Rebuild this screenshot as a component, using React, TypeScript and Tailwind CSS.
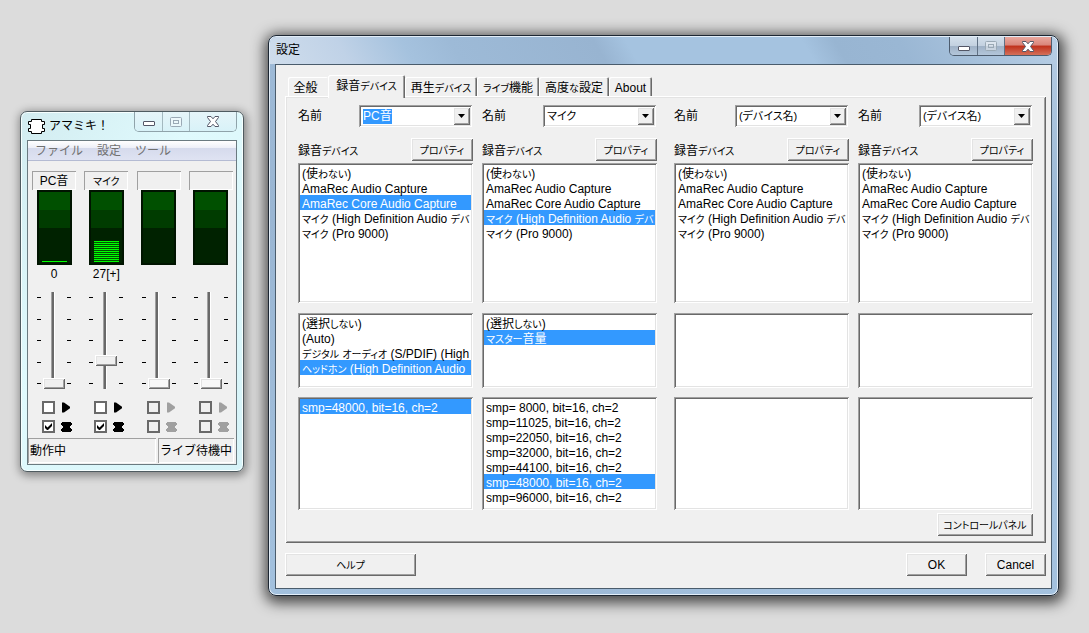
import { useEffect, useRef, useState } from 'react';
import clsx from 'clsx';

interface Device {
  name: string;
  inputs: string[];
  input?: number;
  lines: string[];
  line?: number;
  formats: string[];
  format?: number;
}

interface Channel {
  label: string;
  value: string;
  level: number;
  volume: number;
  enabled: boolean;
}

const INPUTS = [
  '(使わない)',
  'AmaRec Audio Capture',
  'AmaRec Core Audio Capture',
  'マイク (High Definition Audio デバ',
  'マイク (Pro 9000)',
];

const DEVICES: Device[] = [
  {
    name: 'PC音',
    inputs: INPUTS,
    input: 2,
    lines: [
      '(選択しない)',
      '(Auto)',
      'デジタル オーディオ (S/PDIF) (High',
      'ヘッドホン (High Definition Audio',
    ],
    line: 3,
    formats: ['smp=48000, bit=16, ch=2'],
    format: 0,
  },
  {
    name: 'マイク',
    inputs: INPUTS,
    input: 3,
    lines: ['(選択しない)', 'マスター音量'],
    line: 1,
    formats: [
      'smp= 8000, bit=16, ch=2',
      'smp=11025, bit=16, ch=2',
      'smp=22050, bit=16, ch=2',
      'smp=32000, bit=16, ch=2',
      'smp=44100, bit=16, ch=2',
      'smp=48000, bit=16, ch=2',
      'smp=96000, bit=16, ch=2',
    ],
    format: 5,
  },
  { name: '(デバイス名)', inputs: INPUTS, lines: [], formats: [] },
  { name: '(デバイス名)', inputs: INPUTS, lines: [], formats: [] },
];

const CHANNELS: Channel[] = [
  { label: 'PC音', value: '0', level: 1, volume: 0, enabled: true },
  { label: 'マイク', value: '27[+]', level: 11, volume: 27, enabled: true },
  { label: '', value: '', level: 0, volume: 0, enabled: false },
  { label: '', value: '', level: 0, volume: 0, enabled: false },
];

const TABS = [
  { label: '全般', width: 'w-[40px]' },
  { label: '録音デバイス', width: 'w-[77px]' },
  { label: '再生デバイス', width: 'w-[72px]' },
  { label: 'ライブ機能', width: 'w-[62px]' },
  { label: '高度な設定', width: 'w-[70px]' },
  { label: 'About', width: 'w-[43px]' },
];

// classic Windows bevels
const RAISED =
  'shadow-[inset_1px_1px_0_#ffffff,inset_-1px_-1px_0_#696969,inset_2px_2px_0_#e3e3e3,inset_-2px_-2px_0_#a0a0a0]';
const SUNKEN =
  'shadow-[inset_1px_1px_0_#a0a0a0,inset_-1px_-1px_0_#ffffff,inset_2px_2px_0_#696969,inset_-2px_-2px_0_#e3e3e3]';
const THIN_SUNKEN = 'shadow-[inset_1px_1px_0_#a0a0a0,inset_-1px_-1px_0_#ffffff]';

// UI Gothic style: kana are set smaller than kanji and latin letters
function Gothic({ text }: { text: string }) {
  return text.split(/([\u3040-\u30ff]+)/).map((part, i) =>
    i % 2 ? (
      <span key={i} className="text-[10px]">
        {part}
      </span>
    ) : (
      part
    ),
  );
}

function Button({ label, className }: { label: string; className?: string }) {
  return (
    <button type="button" className={clsx('h-[23px] bg-[#f0f0f0] pt-[2px] whitespace-nowrap', RAISED, className)}>
      <Gothic text={label} />
    </button>
  );
}

function MinimizeIcon() {
  return (
    <svg width="12" height="5" viewBox="0 0 12 5">
      <rect x="0.5" y="0.5" width="11" height="4" rx="0.5" fill="#fff" stroke="#535666" />
    </svg>
  );
}

function MaximizeIcon() {
  return (
    <svg width="12" height="10" viewBox="0 0 12 10" fill="none" stroke="#9aa9b5">
      <rect x="0.5" y="0.5" width="11" height="9" rx="1" fill="#fff" fillOpacity="0.4" />
      <rect x="3.5" y="3.5" width="5" height="3" />
    </svg>
  );
}

function CloseIcon() {
  return (
    <svg width="12" height="11" viewBox="0 0 12 11">
      <path
        d="M0.5 0.5h3.5l2 2.3 2-2.3h3.5v1L8.5 5.5l3 4v1H8L6 8.2l-2 2.3H0.5v-1l3-4-3-4z"
        fill="#fff"
        stroke="#535666"
      />
    </svg>
  );
}

function CaptionButtons({ active }: { active?: boolean }) {
  const plain = active
    ? 'bg-[linear-gradient(#d3dfeb,#c3d1e0_48%,#9fb1c6_50%,#b3c6da)]'
    : 'bg-linear-to-b from-[#e6f5f9] to-[#d8f2f8]';
  return (
    <div
      className={clsx(
        'flex divide-x overflow-hidden rounded-b-[5px] border border-t-0',
        active ? 'h-[19px] divide-[#5f7084] border-[#4d5c6e]' : 'h-[20px] divide-[#a3b8bf] border-[#8fa3aa]',
      )}
    >
      <button type="button" aria-label="最小化" className={clsx('flex w-[28px] items-center justify-center pt-[4px]', plain)}>
        <MinimizeIcon />
      </button>
      <button type="button" aria-label="最大化" disabled className={clsx('flex w-[27px] items-center justify-center', plain)}>
        <MaximizeIcon />
      </button>
      <button
        type="button"
        aria-label="閉じる"
        className={clsx(
          'flex w-[46px] items-center justify-center',
          active ? 'bg-[linear-gradient(#eaa79d,#d9857a_45%,#c0301b_50%,#d4705a)]' : plain,
        )}
      >
        <CloseIcon />
      </button>
    </div>
  );
}

function PlayIcon() {
  return (
    <svg width="10" height="11" viewBox="0 0 10 11" fill="currentColor">
      <path d="M1 0.5h2L9 4.7v1.6L3 10.5H1z" />
    </svg>
  );
}

function ChipIcon() {
  return (
    <svg width="11" height="10" viewBox="0 0 11 10" fill="currentColor">
      <path d="M1 0h9v1h1v2h-1v1H9v2h1v1h1v2h-1v1H1V9H0V7h1V6h1V4H1V3H0V1h1z" />
    </svg>
  );
}

function CheckBox({ label, checked, disabled }: { label: string; checked?: boolean; disabled?: boolean }) {
  return (
    <span className="relative flex">
      <input
        type="checkbox"
        aria-label={label}
        defaultChecked={checked}
        disabled={disabled}
        className="peer size-[13px] appearance-none border-2 border-[#696969] bg-white disabled:bg-[#f0f0f0]"
      />
      <svg
        width="13"
        height="13"
        viewBox="0 0 13 13"
        className="pointer-events-none absolute inset-0 hidden peer-checked:block"
      >
        <path d="M3 5v3l2 2h1l4-4V3L5.5 7.5z" fill="#000" />
      </svg>
    </span>
  );
}

function Ticks() {
  return (
    <div className="flex h-[87px] flex-col justify-between">
      {[0, 1, 2, 3, 4].map((i) => (
        <span key={i} className="h-px w-[4px] bg-black" />
      ))}
    </div>
  );
}

function Meter({ level }: { level: number }) {
  return (
    <div className="flex h-[75px] w-[35px] flex-col justify-end border-2 border-[#001400] bg-[linear-gradient(#005000_0_18px,#003c00_18px_36px,#002200_36px)] px-[3px] pb-px">
      <div className="flex flex-col gap-px bg-[#005000]">
        {Array.from({ length: level }, (_, i) => (
          <span key={i} className="h-px bg-[#00ff00]" />
        ))}
      </div>
    </div>
  );
}

function ChannelStrip({ channel, index }: { channel: Channel; index: number }) {
  const off = !channel.enabled;
  return (
    <div className="flex w-[44px] flex-col items-center">
      <div className={clsx('h-[19px] w-full text-center leading-[20px]', THIN_SUNKEN)}>
        <Gothic text={channel.label} />
      </div>
      <Meter level={channel.level} />
      <div className="h-[27px] leading-[18px]">{channel.value}</div>
      <div className="relative flex h-[97px] w-[34px] items-start justify-between pt-[5px]">
        <Ticks />
        <Ticks />
        <div className="absolute inset-0 flex justify-center pr-[3px]">
          <span className="h-full w-[4px] border-r border-l border-l-[#a0a0a0] border-r-white bg-[#696969]" />
        </div>
        <div className="absolute inset-0 flex justify-center">
          <input
            type="range"
            aria-label={`音量 ${index + 1}`}
            defaultValue={channel.volume}
            disabled={off}
            className={clsx(
              'm-0 h-full w-[22px] shrink-0 appearance-none bg-transparent [direction:rtl] [writing-mode:vertical-lr]',
              '[&::-webkit-slider-thumb]:h-[11px] [&::-webkit-slider-thumb]:w-[22px] [&::-webkit-slider-thumb]:appearance-none [&::-webkit-slider-thumb]:bg-[#f0f0f0]',
              '[&::-webkit-slider-thumb]:shadow-[inset_1px_1px_0_#ffffff,inset_-1px_-1px_0_#696969,inset_2px_2px_0_#e3e3e3,inset_-2px_-2px_0_#a0a0a0]',
              'disabled:[&::-webkit-slider-thumb]:bg-[#f8f8f8]',
            )}
          />
        </div>
      </div>
      <div className={clsx('mt-[12px] flex flex-col gap-[6px] pl-[6px]', off ? 'text-[#a0a0a0]' : 'text-black')}>
        <div className="flex items-center gap-[6px]">
          <CheckBox label={`再生 ${index + 1}`} disabled={off} />
          <PlayIcon />
        </div>
        <div className="flex items-center gap-[6px]">
          <CheckBox label={`録音 ${index + 1}`} checked={channel.enabled} disabled={off} />
          <ChipIcon />
        </div>
      </div>
    </div>
  );
}

function MixerWindow() {
  return (
    <section
      aria-label="アマミキ！"
      className="absolute top-[111px] left-[20px] w-[224px] rounded-[7px] border border-[#4f5b60] bg-linear-to-br from-[#d2ecf0] via-[#e0fafd] via-40% to-[#d6f3f8] px-[6px] pb-[6px] shadow-[inset_0_0_0_1px_#f6ffff,1px_2px_9px_2px_rgba(0,0,0,0.38)]"
    >
      <header className="flex h-[28px] items-start justify-between">
        <div className="flex h-[28px] items-center gap-[4px] pl-[1px]">
          <svg width="17" height="15" viewBox="0 0 17 15" fill="#fff" stroke="#000">
            <path d="M3.5 0.5h10v2h3v3h-2v4h2v3h-3v2h-10v-2h-3v-3h2v-4h-2v-3h3z" />
          </svg>
          <h1>アマミキ！</h1>
        </div>
        <CaptionButtons />
      </header>
      <div className="border border-[#6a7a80] bg-[#f0f0f0]">
        <nav className="flex h-[20px] items-center gap-[14px] border-b border-[#b4bbd3] bg-[linear-gradient(#ffffff,#eef0f8_35%,#d5daec_36%,#dfe3f2)] px-[7px] pt-[2px] text-[#707070]">
          <button type="button">ファイル</button>
          <button type="button">設定</button>
          <button type="button">ツール</button>
        </nav>
        <div className="flex justify-between pt-[10px] pr-[3px] pl-[4px] [font-feature-settings:'palt']">
          {CHANNELS.map((channel, i) => (
            <ChannelStrip key={i} channel={channel} index={i} />
          ))}
        </div>
        <footer className="mt-[5px] flex gap-[2px] pr-[2px] pb-px leading-[26px]">
          <div className={clsx('h-[25px] flex-1 pl-[2px]', THIN_SUNKEN)}>動作中</div>
          <div className={clsx('h-[25px] px-[2px]', THIN_SUNKEN)}>ライブ待機中</div>
        </footer>
      </div>
    </section>
  );
}

function ComboBox({ id, value, focused }: { id: string; value: string; focused?: boolean }) {
  const ref = useRef<HTMLInputElement>(null);

  useEffect(() => {
    if (focused) {
      ref.current?.focus();
      ref.current?.select();
    }
  }, [focused]);

  return (
    <div className={clsx('mr-px flex h-[22px] w-[113px] bg-white p-[2px]', SUNKEN)}>
      <input
        id={id}
        ref={ref}
        type="text"
        defaultValue={value}
        className={clsx(
          'min-w-0 flex-1 pt-px pl-[2px] outline-none selection:bg-[#3399ff] selection:text-white',
          !focused && 'text-[11px]',
        )}
      />
      <button
        type="button"
        aria-label="一覧を開く"
        className={clsx('flex w-[17px] items-center justify-center bg-[#f0f0f0]', RAISED)}
      >
        <svg width="7" height="4" viewBox="0 0 7 4">
          <path d="M0 0h7L3.5 4z" />
        </svg>
      </button>
    </div>
  );
}

interface ListBoxProps {
  label: string;
  items: string[];
  selected?: number;
  className: string;
}

function ListBox({ label, items, selected, className }: ListBoxProps) {
  const [value, setValue] = useState(selected);
  return (
    <div className={clsx('bg-white p-[2px]', SUNKEN, className)}>
      <ul role="listbox" aria-label={label} tabIndex={0} className="h-full overflow-hidden outline-none">
        {items.map((item, i) => (
          <li
            key={item}
            role="option"
            aria-selected={value === i}
            onClick={() => setValue(i)}
            className={clsx(
              'h-[15px] pl-[2px] leading-[18px] whitespace-pre',
              value === i && 'bg-[#3399ff] text-white',
            )}
          >
            <Gothic text={item} />
          </li>
        ))}
      </ul>
    </div>
  );
}

function DeviceColumn({ device, index }: { device: Device; index: number }) {
  return (
    <div className="flex min-w-0 flex-col">
      <div className="flex items-start justify-between">
        <label htmlFor={`name-${index}`} className="leading-[22px]">
          名前
        </label>
        <ComboBox id={`name-${index}`} value={device.name} focused={index === 0} />
      </div>
      <div className="mt-[11px] flex items-center justify-between">
        <h3 className="pt-[3px] whitespace-nowrap">
          <Gothic text="録音デバイス" />
        </h3>
        <Button label="プロパティ" className="w-[62px]" />
      </div>
      <ListBox label="録音デバイス" items={device.inputs} selected={device.input} className="mt-[2px] h-[140px]" />
      <ListBox label="入力ライン" items={device.lines} selected={device.line} className="mt-[10px] h-[75px]" />
      <ListBox label="フォーマット" items={device.formats} selected={device.format} className="mt-[9px] h-[113px]" />
    </div>
  );
}

function SettingsDialog() {
  const [tab, setTab] = useState(1);
  return (
    <section
      role="dialog"
      aria-label="設定"
      className="absolute top-[35px] right-[30px] left-[268px] rounded-[8px] border border-[#1d2733] bg-[linear-gradient(60deg,#a3c1de_0%,#9ab6d3_20%,#a5c3e0_50%,#a3c1de_75%,#98b6d3_90%,#b7cee5_100%)] px-[6px] pb-[6px] shadow-[inset_0_0_0_1px_#e3eef8,1px_3px_14px_4px_rgba(0,0,0,0.68)]"
    >
      <header className="-mx-[5px] mt-px flex h-[27px] items-start justify-between rounded-t-[6px] bg-[linear-gradient(60deg,#cfddec_0%,#c0d2e7_10%,#a5c2de_18%,#9dbad7_24%,#98b4d1_42%,#a5c3e0_46%,#a5c3e0_68%,#98b5d2_72%,#9ab7d4_80%,#b7cee5_100%)] px-[5px]">
        <h2 className="pl-[1px] leading-[27px]">設定</h2>
        <CaptionButtons active />
      </header>
      <div className="border border-[#4a5c6c] bg-[#f0f0f0] pt-[10px] pr-[5px] pb-[12px] pl-[9px] [font-feature-settings:'palt']">
        <div role="tablist" className="flex h-[21px] items-end pl-[3px]">
          {TABS.map((t, i) => (
            <button
              key={t.label}
              type="button"
              role="tab"
              aria-selected={tab === i}
              onClick={() => setTab(i)}
              className={clsx(
                'rounded-t-[2px] bg-[#f0f0f0] whitespace-nowrap',
                t.width,
                tab === i ? 'relative z-10 -mb-[2px] h-[23px]' : 'h-[19px] pt-[3px]',
                // the tab left of the open one loses its right edge
                i === tab - 1
                  ? 'pr-[5px] shadow-[inset_1px_1px_0_#ffffff]'
                  : 'shadow-[inset_1px_1px_0_#ffffff,inset_-1px_0_0_#696969,inset_-2px_0_0_#a0a0a0]',
              )}
            >
              <Gothic text={t.label} />
            </button>
          ))}
        </div>
        <div role="tabpanel" className={clsx('px-[13px] pt-[9px] pb-[7px]', RAISED)}>
          <div className="flex gap-[17px]">
            {[0, 2].map((start) => (
              <div key={start} className="grid min-w-0 flex-1 grid-cols-2 gap-[9px]">
                {DEVICES.slice(start, start + 2).map((device, i) => (
                  <DeviceColumn key={i} device={device} index={start + i} />
                ))}
              </div>
            ))}
          </div>
          <div className="mt-[3px] flex justify-end">
            <Button label="コントロールパネル" className="w-[96px]" />
          </div>
        </div>
        <div className="mt-[10px] flex justify-between">
          <Button label="ヘルプ" className="w-[131px]" />
          <div className="flex gap-[18px]">
            <Button label="OK" className="w-[61px]" />
            <Button label="Cancel" className="w-[61px]" />
          </div>
        </div>
      </div>
    </section>
  );
}

export default function App() {
  return (
    <main className="relative min-h-screen overflow-hidden bg-[#dcdcdc] font-['Liberation_Sans','Noto_Sans_CJK_JP',sans-serif] text-[12px] leading-[15px] text-black">
      <MixerWindow />
      <SettingsDialog />
    </main>
  );
}
